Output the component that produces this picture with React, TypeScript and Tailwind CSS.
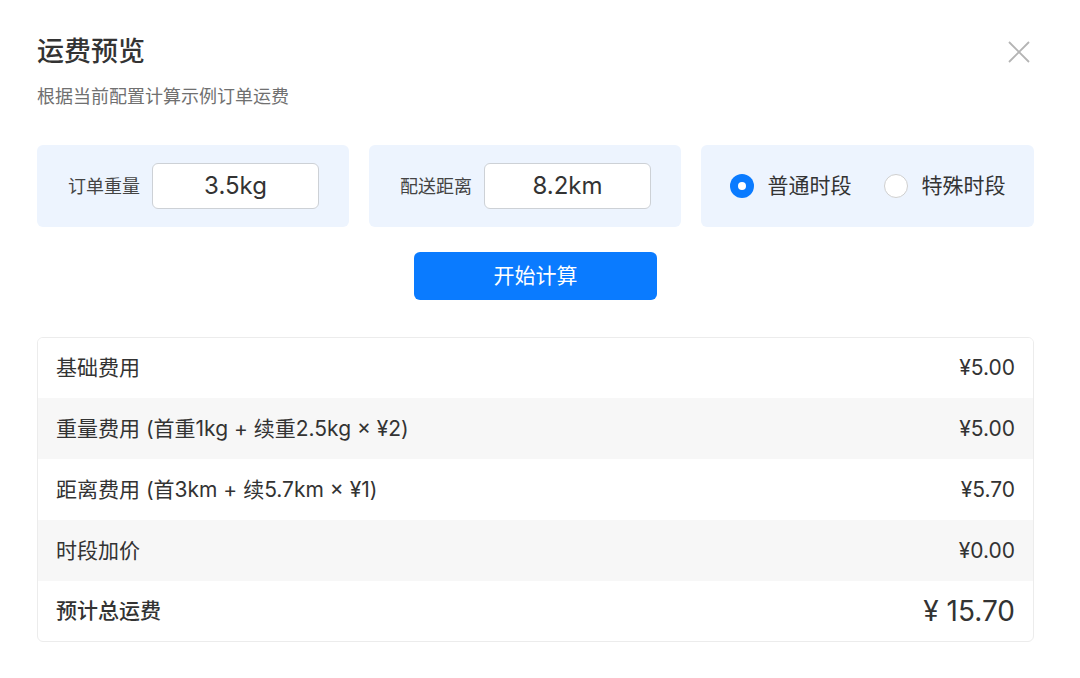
import React from "react";

const font = { fontFamily: 'Inter, "Noto Sans CJK SC", sans-serif' };

interface FeeRow {
  label: string;
  value: string;
  striped?: boolean;
  height: string;
}

const rows: FeeRow[] = [
  { label: "基础费用", value: "¥5.00", height: "h-[60px]" },
  { label: "重量费用 (首重1kg + 续重2.5kg × ¥2)", value: "¥5.00", striped: true, height: "h-[61px]" },
  { label: "距离费用 (首3km + 续5.7km × ¥1)", value: "¥5.70", height: "h-[61px]" },
  { label: "时段加价", value: "¥0.00", striped: true, height: "h-[61px]" },
];

function InputCard({ label, value }: { label: string; value: string }) {
  return (
    <div className="w-[312px] h-[82px] rounded-[6px] bg-[#edf4fe] flex items-center pl-[31px] pr-[30px] gap-[12px]">
      <span className="text-[18px] text-[#444] whitespace-nowrap">{label}</span>
      <div className="flex-1 h-[46px] rounded-[6px] bg-white border border-[#cdd1d6] flex items-center justify-center text-[24px] text-[#333]">
        {value}
      </div>
    </div>
  );
}

function Radio({ checked, label }: { checked?: boolean; label: string }) {
  return (
    <div className="flex items-center gap-[14px]">
      {checked ? (
        <span className="w-[24px] h-[24px] rounded-full bg-[#0a7bff] flex items-center justify-center">
          <span className="w-[8px] h-[8px] rounded-full bg-white" />
        </span>
      ) : (
        <span className="w-[24px] h-[24px] rounded-full bg-white border border-[#cfcfcf]" />
      )}
      <span className="text-[21px] text-[#333]">{label}</span>
    </div>
  );
}

export default function App() {
  return (
    <div className="w-[1080px] h-[678px] bg-white relative pl-[37px] pr-[46px] pt-[34px]" style={font}>
      {/* close */}
      <button className="absolute left-[1008px] top-[41px] w-[22px] h-[22px]">
        <svg viewBox="0 0 22 22" width="22" height="22">
          <path d="M1 1 L21 21 M21 1 L1 21" stroke="#b4b4b4" strokeWidth="1.8" fill="none" />
        </svg>
      </button>

      <h1 className="text-[27px] leading-[36px] font-medium text-[#333]">运费预览</h1>
      <p className="mt-[14px] text-[18px] leading-[26px] text-[#707070]">根据当前配置计算示例订单运费</p>

      {/* inputs */}
      <div className="mt-[35px] flex gap-[20px]">
        <InputCard label="订单重量" value="3.5kg" />
        <InputCard label="配送距离" value="8.2km" />
        <div className="flex-1 h-[82px] rounded-[6px] bg-[#edf4fe] flex items-center justify-center gap-[32px]">
          <Radio checked label="普通时段" />
          <Radio label="特殊时段" />
        </div>
      </div>

      <div className="mt-[25px] flex justify-center">
        <button className="w-[243px] h-[48px] rounded-[6px] bg-[#0a7bff] text-white text-[21px]">
          开始计算
        </button>
      </div>

      {/* result table */}
      <div className="mt-[37px] border border-[#ececec] rounded-[6px] overflow-hidden">
        {rows.map((r) => (
          <div
            key={r.label}
            className={`${r.height} flex items-center justify-between pl-[18px] pr-[18px] text-[21px] text-[#333] ${
              r.striped ? "bg-[#f7f7f7]" : "bg-white"
            }`}
          >
            <span>{r.label}</span>
            <span className="text-[21px]">{r.value}</span>
          </div>
        ))}
        <div className="h-[60px] flex items-center justify-between pl-[18px] pr-[18px] text-[#333]">
          <span className="text-[21px] font-medium">预计总运费</span>
          <span className="text-[28px]">¥ 15.70</span>
        </div>
      </div>
    </div>
  );
}
